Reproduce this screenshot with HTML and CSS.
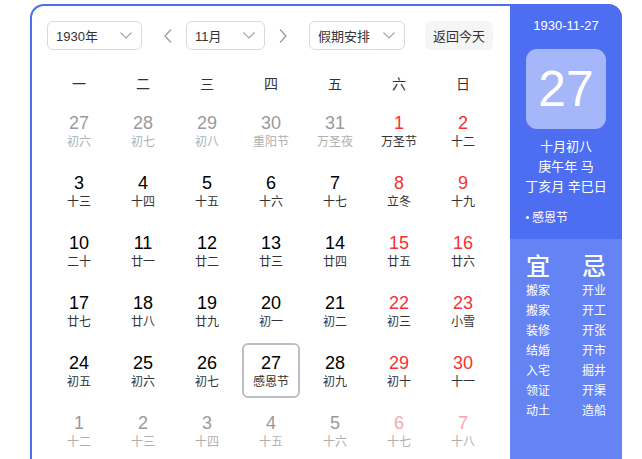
FILE: index.html
```html
<!DOCTYPE html>
<html lang="zh-CN">
<head>
<meta charset="utf-8">
<title>万年历</title>
<link rel="stylesheet" href="styles.css">
</head>
<body>
<div class="cal">
  <div class="main">
    <div class="toolbar">
      <div class="select sel-year"><span>1930年</span><svg class="chev" viewBox="0 0 12 7" width="12" height="7"><path d="M0.5 0.5 L6 6 L11.5 0.5" fill="none" stroke="#a0a3ab" stroke-width="1.1"/></svg></div>
      <span class="arrow arrow-prev"><svg viewBox="0 0 8 14" width="8" height="14"><path d="M7 0.5 L1 7 L7 13.5" fill="none" stroke="#9a9da6" stroke-width="1.3"/></svg></span>
      <div class="select sel-month"><span>11月</span><svg class="chev" viewBox="0 0 12 7" width="12" height="7"><path d="M0.5 0.5 L6 6 L11.5 0.5" fill="none" stroke="#a0a3ab" stroke-width="1.1"/></svg></div>
      <span class="arrow arrow-next"><svg viewBox="0 0 8 14" width="8" height="14"><path d="M1 0.5 L7 7 L1 13.5" fill="none" stroke="#9a9da6" stroke-width="1.3"/></svg></span>
      <div class="select sel-holiday"><span>假期安排</span><svg class="chev" viewBox="0 0 12 7" width="12" height="7"><path d="M0.5 0.5 L6 6 L11.5 0.5" fill="none" stroke="#a0a3ab" stroke-width="1.1"/></svg></div>
      <button class="today-btn">返回今天</button>
    </div>
    <div class="weekdays">
      <span>一</span><span>二</span><span>三</span><span>四</span><span>五</span><span>六</span><span>日</span>
    </div>
    <div class="days">
      <div class="day other"><b>27</b><i>初六</i></div>
      <div class="day other"><b>28</b><i>初七</i></div>
      <div class="day other"><b>29</b><i>初八</i></div>
      <div class="day other"><b>30</b><i>重阳节</i></div>
      <div class="day other"><b>31</b><i>万圣夜</i></div>
      <div class="day we"><b>1</b><i>万圣节</i></div>
      <div class="day we"><b>2</b><i>十二</i></div>

      <div class="day"><b>3</b><i>十三</i></div>
      <div class="day"><b>4</b><i>十四</i></div>
      <div class="day"><b>5</b><i>十五</i></div>
      <div class="day"><b>6</b><i>十六</i></div>
      <div class="day"><b>7</b><i>十七</i></div>
      <div class="day we"><b>8</b><i>立冬</i></div>
      <div class="day we"><b>9</b><i>十九</i></div>

      <div class="day"><b>10</b><i>二十</i></div>
      <div class="day"><b>11</b><i>廿一</i></div>
      <div class="day"><b>12</b><i>廿二</i></div>
      <div class="day"><b>13</b><i>廿三</i></div>
      <div class="day"><b>14</b><i>廿四</i></div>
      <div class="day we"><b>15</b><i>廿五</i></div>
      <div class="day we"><b>16</b><i>廿六</i></div>

      <div class="day"><b>17</b><i>廿七</i></div>
      <div class="day"><b>18</b><i>廿八</i></div>
      <div class="day"><b>19</b><i>廿九</i></div>
      <div class="day"><b>20</b><i>初一</i></div>
      <div class="day"><b>21</b><i>初二</i></div>
      <div class="day we"><b>22</b><i>初三</i></div>
      <div class="day we"><b>23</b><i>小雪</i></div>

      <div class="day"><b>24</b><i>初五</i></div>
      <div class="day"><b>25</b><i>初六</i></div>
      <div class="day"><b>26</b><i>初七</i></div>
      <div class="day selected"><b>27</b><i>感恩节</i></div>
      <div class="day"><b>28</b><i>初九</i></div>
      <div class="day we"><b>29</b><i>初十</i></div>
      <div class="day we"><b>30</b><i>十一</i></div>

      <div class="day other"><b>1</b><i>十二</i></div>
      <div class="day other"><b>2</b><i>十三</i></div>
      <div class="day other"><b>3</b><i>十四</i></div>
      <div class="day other"><b>4</b><i>十五</i></div>
      <div class="day other"><b>5</b><i>十六</i></div>
      <div class="day other we"><b>6</b><i>十七</i></div>
      <div class="day other we"><b>7</b><i>十八</i></div>
    </div>
  </div>
  <div class="side">
    <div class="side-top">
      <div class="side-date">1930-11-27</div>
      <div class="big-day">27</div>
      <div class="lunar">
        <div>十月初八</div>
        <div>庚午年 马</div>
        <div>丁亥月 辛巳日</div>
      </div>
      <ul class="festivals"><li>感恩节</li></ul>
    </div>
    <div class="side-bottom">
      <div class="col">
        <div class="col-head">宜</div>
        <div>搬家</div><div>搬家</div><div>装修</div><div>结婚</div><div>入宅</div><div>领证</div><div>动土</div>
      </div>
      <div class="col">
        <div class="col-head">忌</div>
        <div>开业</div><div>开工</div><div>开张</div><div>开市</div><div>掘井</div><div>开渠</div><div>造船</div>
      </div>
    </div>
  </div>
</div>
</body>
</html>
```

FILE: styles.css
```css
* { box-sizing: border-box; }
html, body { margin: 0; padding: 0; background: #fff; }
body {
  font-family: "Liberation Sans", "Noto Sans CJK SC", sans-serif;
  color: #333;
  overflow: hidden;
}
.cal {
  display: flex;
  margin: 4px 0 0 30px;
  width: 592px;
  height: 455px;
}
.main {
  width: 480px;
  border: 2px solid #4e6ef2;
  border-right: none;
  border-bottom: none;
  border-radius: 14px 0 0 0;
  padding: 15px 15px 0 15px;
}
.toolbar {
  display: flex;
  align-items: center;
  height: 29px;
}
.select {
  height: 29px;
  border: 1px solid #d8dae0;
  border-radius: 6px;
  display: flex;
  align-items: center;
  justify-content: space-between;
  padding: 0 9px 0 8px;
  font-size: 13px;
  color: #333;
}
.sel-year { width: 95px; }
.sel-month { width: 79px; }
.sel-holiday { width: 96px; }
.chev { display: block; }
.arrow { display: flex; align-items: center; width: 12px; justify-content: center; }
.arrow svg { display: block; }
.arrow-prev { margin: 0 12px 0 20px; }
.arrow-next { margin: 0 20px 0 12px; }
.today-btn {
  margin-left: 20px;
  width: 68px;
  height: 29px;
  border: none;
  border-radius: 6px;
  background: #f5f5f6;
  font-family: inherit;
  font-size: 13px;
  color: #333;
  padding: 0;
}
.weekdays {
  display: grid;
  grid-template-columns: repeat(7, 64px);
  margin-top: 19px;
  height: 30px;
  line-height: 30px;
  font-size: 14px;
  text-align: center;
  color: #333;
}
.days {
  display: grid;
  grid-template-columns: repeat(7, 64px);
  grid-auto-rows: 60px;
  margin-top: 4px;
}
.day {
  margin: 0 3px;
  height: 55px;
  padding-top: 10px;
  text-align: center;
  border: 2px solid transparent;
  border-radius: 6px;
}
.day b {
  display: block;
  font-weight: normal;
  font-size: 18px;
  line-height: 20px;
  color: #000;
  margin-top: -2px;
}
.day i {
  display: block;
  font-style: normal;
  font-size: 12px;
  line-height: 18px;
  color: #333;
}
.day.we b { color: #f73131; }
.day.other b { color: #9a9a9a; }
.day.other i { color: #b0b0b0; }
.day.other.we b { color: #f7a8a8; }
.day.selected { border-color: #bcbfc6; }
.side {
  width: 112px;
  display: flex;
  flex-direction: column;
  border-radius: 0 14px 0 0;
  overflow: hidden;
  background: #6484f4;
  color: #fff;
}
.side-top {
  background: #4e6ef2;
  padding: 12px 0 11px 0;
}
.side-date {
  font-size: 13px;
  line-height: 20px;
  text-align: center;
}
.big-day {
  margin: 13px auto 0 auto;
  width: 80px;
  height: 80px;
  border-radius: 11px;
  background: #a5b6f9;
  font-size: 50px;
  line-height: 80px;
  text-align: center;
  color: #fff;
}
.lunar {
  margin-top: 8px;
  font-size: 13px;
  line-height: 20px;
  text-align: center;
  white-space: nowrap;
}
.festivals {
  list-style: none;
  margin: 11px 0 0 0;
  padding: 0 0 0 16px;
  font-size: 12px;
  line-height: 20px;
}
.festivals li::before {
  content: "";
  display: inline-block;
  width: 3px;
  height: 3px;
  border-radius: 50%;
  background: #fff;
  vertical-align: middle;
  margin: 0 3px 2px 0;
}
.side-bottom {
  flex: 1;
  display: flex;
  gap: 32px;
  padding: 14px 0 0 16px;
}
.col {
  width: 24px;
  text-align: center;
  font-size: 12px;
  line-height: 20px;
}
.col-head {
  font-size: 24px;
  line-height: 28px;
  margin-left: -2px;
  margin-right: -2px;
  font-weight: 500;
}
```
